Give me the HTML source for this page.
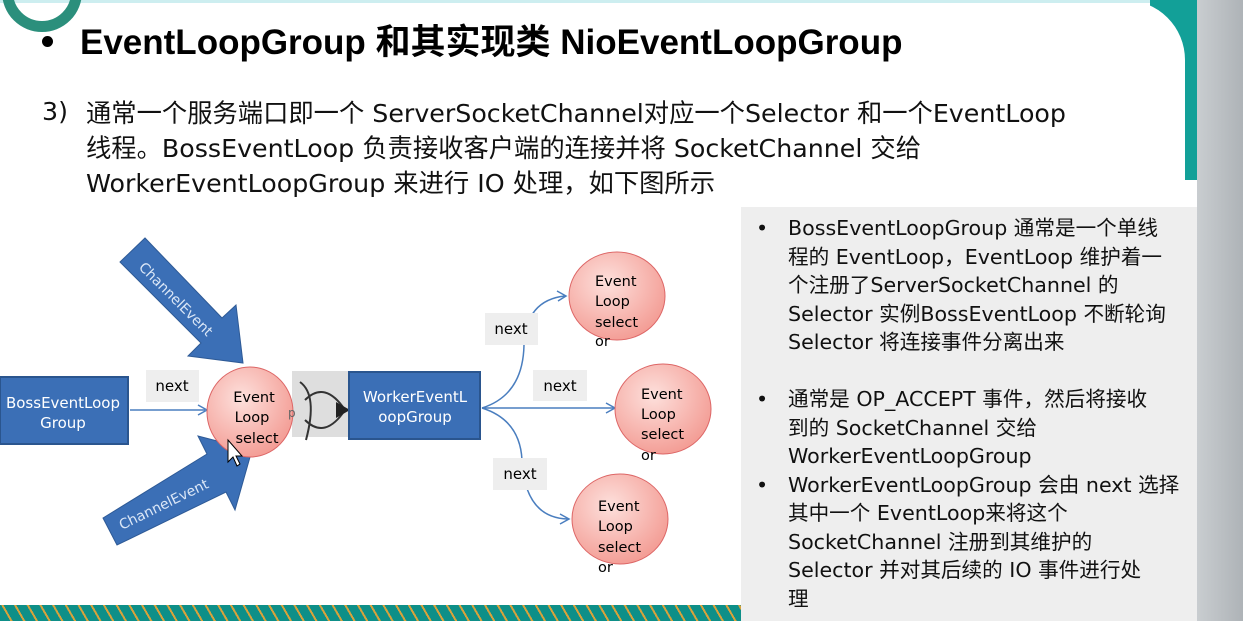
<!DOCTYPE html>
<html><head><meta charset="utf-8"><style>
html,body{margin:0;padding:0;width:1243px;height:621px;overflow:hidden;background:#fff;}
body{position:relative;font-family:"Liberation Sans","Noto Sans CJK SC",sans-serif;}
.abs{position:absolute;}
.p{font-family:"DejaVu Sans","Noto Sans CJK SC",sans-serif;font-size:25.3px;color:#111;white-space:nowrap;}
.r{font-family:"DejaVu Sans","Noto Sans CJK SC",sans-serif;font-size:20.6px;color:#111;white-space:nowrap;line-height:28.5px;}
</style></head><body>
<div class="abs" style="left:1197px;top:0;width:46px;height:621px;background:linear-gradient(90deg,#c9cdd0,#aeb3b7)"></div>
<div class="abs" style="left:1150px;top:0;width:47px;height:180px;background:#12a098"></div>
<div class="abs" style="left:0;top:0;width:1185px;height:605px;background:#fff;border-top-right-radius:60px;border-bottom-left-radius:40px"></div>
<div class="abs" style="left:0;top:0;width:1150px;height:3px;background:#cdeef0"></div>
<div class="abs" style="left:0;top:605px;width:1197px;height:16px;background:repeating-linear-gradient(60deg,#0e8f88 0 9px,#d9a23a 9px 11px);"></div>
<div class="abs" style="left:2px;top:-48px;width:58px;height:58px;border:11px solid #2b8f7c;border-radius:50%"></div>
<div class="abs" style="left:42px;top:36px;width:11px;height:11px;border-radius:50%;background:#000"></div>
<div class="abs" style="left:80px;top:14px;font-size:35px;font-weight:bold;color:#000;white-space:nowrap;font-family:'Liberation Sans','Noto Sans CJK SC',sans-serif">EventLoopGroup 和其实现类 NioEventLoopGroup</div>
<div class="abs p" style="left:42px;top:97px">3)</div>
<div class="abs p" style="left:86px;top:96px;line-height:35px">通常一个服务端口即一个 ServerSocketChannel对应一个Selector 和一个EventLoop<br>线程。BossEventLoop 负责接收客户端的连接并将 SocketChannel 交给<br>WorkerEventLoopGroup 来进行 IO 处理，如下图所示</div>
<div class="abs" style="left:741px;top:207px;width:456px;height:414px;background:#eeeeee"></div>
<div class="abs r" style="left:756px;top:214px">•<br><br><br><br><br><br>•<br><br><br>•</div>
<div class="abs r" style="left:788px;top:214px">BossEventLoopGroup 通常是一个单线<br>程的 EventLoop，EventLoop 维护着一<br>个注册了ServerSocketChannel 的<br>Selector 实例BossEventLoop 不断轮询<br>Selector 将连接事件分离出来<br><br>通常是 OP_ACCEPT 事件，然后将接收<br>到的 SocketChannel 交给<br>WorkerEventLoopGroup<br>WorkerEventLoopGroup 会由 next 选择<br>其中一个 EventLoop来将这个<br>SocketChannel 注册到其维护的<br>Selector 并对其后续的 IO 事件进行处<br>理</div>
<svg class="abs" style="left:0;top:0" width="741" height="600" font-family="DejaVu Sans, sans-serif">
<defs><radialGradient id="g" cx="40%" cy="35%" r="70%"><stop offset="0" stop-color="#fde0dc"/><stop offset="1" stop-color="#f39a92"/></radialGradient></defs>
<rect x="292" y="371" width="57" height="66" fill="#dedede"/>
<path d="M130,410 H205" stroke="#4a7ebf" stroke-width="1.5"/><path d="M198,405 L207,410 L198,415" stroke="#4a7ebf" fill="none" stroke-width="1.5"/>
<rect x="146" y="370" width="53" height="32" fill="#eee"/><text x="172" y="391" font-size="15" text-anchor="middle">next</text>
<path d="M120,262 L145,238 L222,318 L236,305 L243,363 L188,356 L201,343 L120,262Z" fill="#3b6fb6" stroke="#2e5a96"/>
<text transform="translate(138,268) rotate(45)" font-size="14" fill="#dbe7f7">ChannelEvent</text>
<path d="M103,518 L117,545 L226,492 L235,510 L252,450 L198,436 L207,454 Z" fill="#3b6fb6" stroke="#2e5a96"/>
<text transform="translate(122,530) rotate(-26)" font-size="14" fill="#dbe7f7">ChannelEvent</text>
<rect x="0" y="377" width="128" height="67" fill="#3b6fb6" stroke="#2a558e" stroke-width="2"/>
<text x="63" y="408" font-size="15" fill="#fff" text-anchor="middle">BossEventLoop</text><text x="63" y="428" font-size="15" fill="#fff" text-anchor="middle">Group</text>
<path d="M300,382 Q318,395 306,440 M305,400 Q325,380 345,410 M305,420 Q325,440 345,410" stroke="#333" stroke-width="2" fill="none"/>
<path d="M336,402 L350,410 L336,418Z" fill="#222"/>
<ellipse cx="250" cy="412" rx="43" ry="45" fill="url(#g)" stroke="#d66" stroke-width="1"/>
<text x="254" y="402" font-size="14.5" text-anchor="middle">Event</text><text x="252" y="422" font-size="14.5" text-anchor="middle">Loop</text><text x="257" y="443" font-size="14.5" text-anchor="middle">select</text>
<text x="288" y="417" font-size="12" fill="#666">p</text>
<rect x="349" y="372" width="131" height="67" fill="#3b6fb6" stroke="#2a558e" stroke-width="2"/>
<text x="415" y="402" font-size="15" fill="#fff" text-anchor="middle">WorkerEventL</text><text x="415" y="422" font-size="15" fill="#fff" text-anchor="middle">oopGroup</text>
<g stroke="#4a7ebf" stroke-width="1.5" fill="none">
<path d="M482,408 Q523,395 524,345 Q526,300 565,296"/><path d="M557,291 L566,296 L558,301"/>
<path d="M482,408 H614"/><path d="M606,403 L615,408 L606,413"/>
<path d="M482,408 Q520,420 522,460 Q525,518 568,519"/><path d="M560,514 L569,519 L560,524"/>
</g>
<rect x="485" y="313" width="53" height="32" fill="#eee"/><text x="511" y="334" font-size="15" text-anchor="middle">next</text>
<rect x="533" y="370" width="54" height="31" fill="#eee"/><text x="560" y="391" font-size="15" text-anchor="middle">next</text>
<rect x="493" y="458" width="54" height="32" fill="#eee"/><text x="520" y="479" font-size="15" text-anchor="middle">next</text>
<g font-size="14.5">
<ellipse cx="617" cy="296" rx="48" ry="44" fill="url(#g)" stroke="#d66"/>
<text x="595" y="286">Event</text><text x="595" y="306">Loop</text><text x="595" y="327">select</text><text x="595" y="346">or</text>
<ellipse cx="663" cy="409" rx="48" ry="45" fill="url(#g)" stroke="#d66"/>
<text x="641" y="399">Event</text><text x="641" y="419">Loop</text><text x="641" y="439">select</text><text x="641" y="460">or</text>
<ellipse cx="620" cy="519" rx="48" ry="45" fill="url(#g)" stroke="#d66"/>
<text x="598" y="511">Event</text><text x="598" y="531">Loop</text><text x="598" y="552">select</text><text x="598" y="572">or</text>
</g>
<path d="M228,440 L228,462 L233,457 L237,466 L240,464 L236,456 L242,456Z" fill="#fff" stroke="#000"/>
</svg>
</body></html>
